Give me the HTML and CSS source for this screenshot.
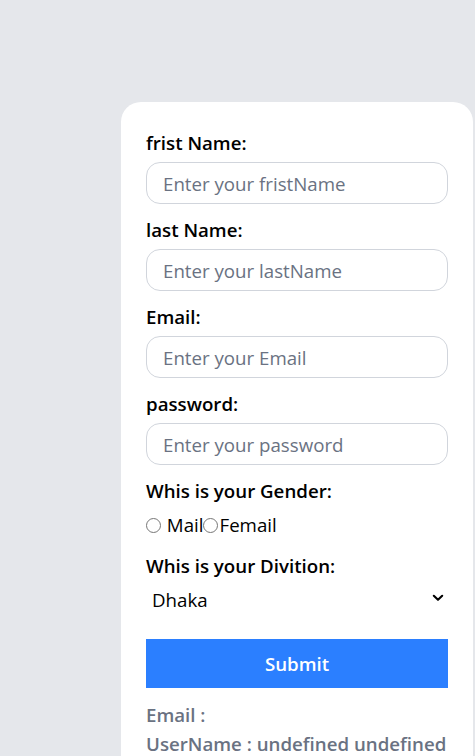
FILE: index.html
```html
<!DOCTYPE html>
<html lang="en">
<head>
<meta charset="utf-8">
<link rel="stylesheet" href="styles.css">
</head>
<body>
<main class="page">
  <form class="card">
    <label class="label" for="fn">frist Name:</label>
    <input class="field" id="fn" type="text" placeholder="Enter your fristName">
    <label class="label" for="ln">last Name:</label>
    <input class="field" id="ln" type="text" placeholder="Enter your lastName">
    <label class="label" for="em">Email:</label>
    <input class="field" id="em" type="email" placeholder="Enter your Email">
    <label class="label" for="pw">password:</label>
    <input class="field" id="pw" type="password" placeholder="Enter your password">
    <p class="label">Whis is your Gender:</p>
    <div class="radios"><input class="radio" type="radio" name="g"> Mail<input class="radio" type="radio" name="g">Femail</div>
    <p class="label label-div">Whis is your Divition:</p>
    <div class="select-wrap">
      <select class="select">
        <option>Dhaka</option>
        <option>Chittagong</option>
      </select>
      <svg class="chev" width="12" height="8" viewBox="0 0 12 8"><path d="M1.8 1.8 L6 5.8 L10.2 1.8" fill="none" stroke="#000" stroke-width="2.1" stroke-linecap="round" stroke-linejoin="round"/></svg>
    </div>
    <button class="submit" type="button">Submit</button>
    <p class="out">Email :</p>
    <p class="out">UserName : undefined undefined</p>
  </form>
</main>
</body>
</html>
```
FILE: styles.css
```css
* { box-sizing: border-box; margin: 0; padding: 0; }
html, body { height: 100%; }
body {
  background: #e5e7eb;
  font-family: "Open Sans", "Noto Sans", sans-serif;
  color: #000;
  overflow: hidden;
}
.page {
  padding: 102px 0 0 121px;
}
.card {
  width: 352px;
  background: #fff;
  border-radius: 20px 20px 0 0;
  padding: 24px 25px 30px;
  display: flex;
  flex-direction: column;
}
.label {
  font-size: 18.7px;
  font-weight: 600;
  line-height: 22px;
  padding-top: 6px;
  display: block;
}
.field {
  margin: 8px 0 9px;
  height: 42px;
  width: 302px;
  border: 1px solid #d1d5dc;
  border-radius: 14px;
  padding: 0 16px;
  font-family: inherit;
  font-size: 18.7px;
  color: #000;
  outline: none;
}
.field::placeholder { color: #6a7282; }
.radios {
  margin-top: 9px;
  font-size: 18.7px;
  line-height: 28px;
  display: flex;
  align-items: center;
  white-space: pre;
}
.radio {
  width: 15px;
  height: 15px;
  margin: 0 1px 0 0;
}
.label-div { margin-top: 10px; }
.select-wrap {
  position: relative;
  margin-top: 2px;
}
.select {
  appearance: none;
  -webkit-appearance: none;
  width: 302px;
  height: 40px;
  border: none;
  background: #fff;
  font-family: inherit;
  font-size: 18.7px;
  color: #000;
  padding: 0 6px;
  outline: none;
}
.chev {
  position: absolute;
  right: 4px;
  top: 15px;
  pointer-events: none;
}
.submit {
  margin-top: 20px;
  height: 49px;
  width: 302px;
  border: none;
  background: #2b7fff;
  color: #fff;
  font-family: inherit;
  font-size: 18.7px;
  font-weight: 600;
  cursor: pointer;
}
.out {
  color: #6a7282;
  font-size: 18.7px;
  font-weight: 600;
  line-height: 29px;
}
.submit + .out { margin-top: 12px; }
```
